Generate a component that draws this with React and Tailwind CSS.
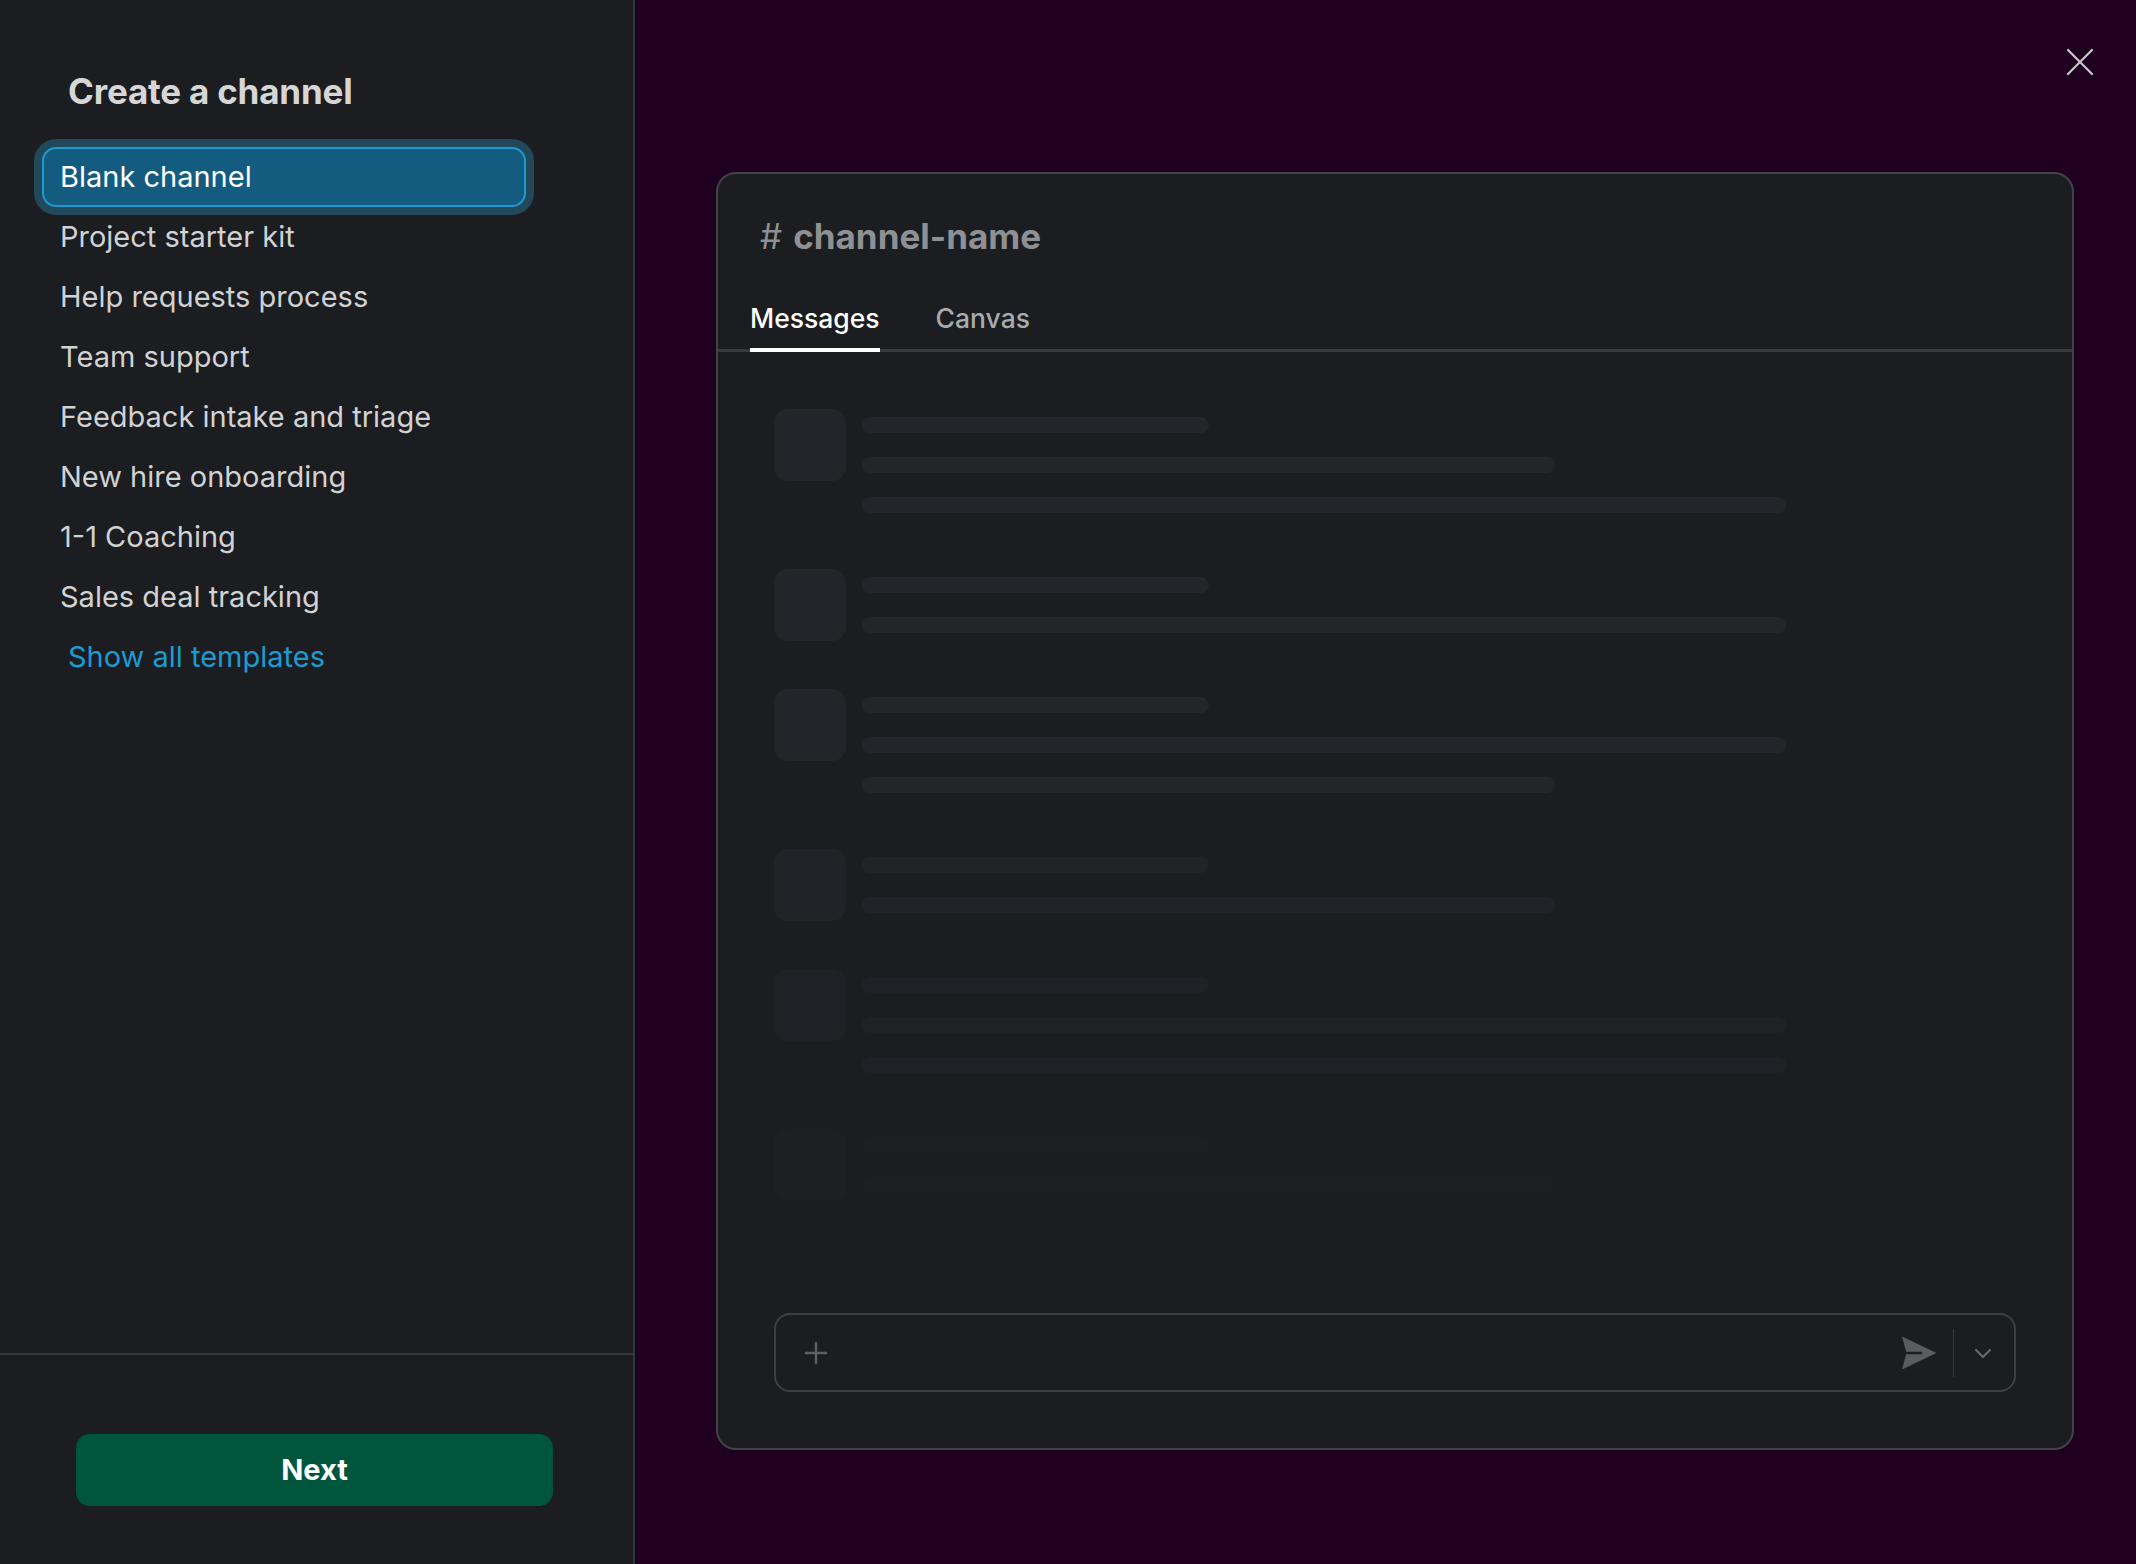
import React from 'react';

const templates = [
  'Blank channel',
  'Project starter kit',
  'Help requests process',
  'Team support',
  'Feedback intake and triage',
  'New hire onboarding',
  '1-1 Coaching',
  'Sales deal tracking',
];

// widths of the placeholder lines
const SHORT = 'w-[347px]';
const MID = 'w-[693px]';
const LONG = 'w-[924px]';

const rows = [
  { lines: [SHORT, MID, LONG], fade: 'opacity-100' },
  { lines: [SHORT, LONG], fade: 'opacity-100' },
  { lines: [SHORT, LONG, MID], fade: 'opacity-100' },
  { lines: [SHORT, MID], fade: 'opacity-80' },
  { lines: [SHORT, LONG, LONG], fade: 'opacity-60' },
  { lines: [SHORT, MID], fade: 'opacity-25' },
];

function SkeletonRow({ lines, fade }) {
  return (
    <div className={`flex gap-4 ${fade}`}>
      <div className="w-[72px] h-[72px] flex-shrink-0 rounded-[14px] bg-[#24252a]" />
      <div className="flex flex-col gap-6 py-2">
        {lines.map((w, i) => (
          <div key={i} className={`${w} h-4 rounded-full bg-[#24252a]`} />
        ))}
      </div>
    </div>
  );
}

function SendIcon() {
  return (
    <svg width="36" height="34" viewBox="0 0 36 34">
      <path d="M1 0.5 L35.5 17 L1 33.5 L5.5 17 Z" fill="#5b5c60" />
      <path d="M6 17 H20" stroke="#1b1d21" strokeWidth="2.5" strokeLinecap="round" />
    </svg>
  );
}

export default function App() {
  return (
    <div className="flex w-full h-[1564px] overflow-hidden font-['Inter','Liberation_Sans',sans-serif]">
      {/* Left — template picker */}
      <div className="w-[635px] flex-shrink-0 bg-[#1b1d21] border-r-2 border-[#35363a] flex flex-col">
        <div className="flex-1 pt-[71px]">
          <h1 className="pl-[68px] text-[35px] leading-[40px] font-bold text-[#d6d6d7] tracking-[-0.2px]">
            Create a channel
          </h1>
          <div className="mt-[36px] flex flex-col">
            {templates.map((t, i) =>
              i === 0 ? (
                <div
                  key={t}
                  className="ml-[42px] w-[484px] h-[60px] flex items-center pl-4 rounded-[14px] bg-[#145b80] border-2 border-[#1d9bd1] shadow-[0_0_0_8px_#22485b] text-[29px] text-white"
                >
                  {t}
                </div>
              ) : (
                <div key={t} className="h-[60px] flex items-center pl-[60px] text-[29px] text-[#d1d2d3]">
                  {t}
                </div>
              )
            )}
            <div className="h-[60px] flex items-center pl-[68px] text-[29px] text-[#1d9bd1]">
              Show all templates
            </div>
          </div>
        </div>
        <div className="border-t-2 border-[#36373b] pt-[79px] pb-[58px] pl-[76px]">
          <button className="w-[477px] h-[72px] rounded-[14px] bg-[#00553d] text-white text-[29px] font-bold">
            Next
          </button>
        </div>
      </div>

      {/* Right — preview */}
      <div className="relative flex-1 bg-[#1f0021] pt-[172px] pl-[81px] pr-[62px]">
        <button className="absolute top-[48px] right-[42px] w-7 h-7 flex items-center justify-center">
          <svg width="28" height="28" viewBox="0 0 28 28" fill="none" stroke="#c8c8ca" strokeWidth="2.2" strokeLinecap="round">
            <path d="M2 2 L26 26 M26 2 L2 26" />
          </svg>
        </button>

        <div className="h-[1278px] rounded-[20px] border-2 border-[#424347] bg-[#1b1d21] flex flex-col">
          <div className="pt-[42px] pl-[42px] text-[35px] leading-[40px] font-bold text-[#8f9093] flex items-baseline">
            <span className="font-normal mr-[11px]">#</span>
            <span>channel-name</span>
          </div>

          <div className="mt-[46px] flex gap-[56px] pl-[32px] border-b-[3px] border-[#393a3e]">
            <div className="pb-[14px] border-b-4 border-white -mb-[3px] text-[26.5px] leading-[32px] font-medium text-white">
              Messages
            </div>
            <div className="pb-[14px] text-[26.5px] leading-[32px] font-medium text-[#a9aaad]">Canvas</div>
          </div>

          <div className="flex-1 pt-[57px] px-[56px] flex flex-col gap-12 overflow-hidden">
            {rows.map((r, i) => (
              <SkeletonRow key={i} lines={r.lines} fade={r.fade} />
            ))}
          </div>

          <div className="px-[56px] pb-[56px]">
            <div className="h-[79px] rounded-[16px] border-2 border-[#3e3f43] flex items-center pl-[28px] pr-[20px]">
              <svg width="24" height="24" viewBox="0 0 24 24" fill="none" stroke="#5f6064" strokeWidth="2.4" strokeLinecap="round">
                <path d="M12 2 V22 M2 12 H22" />
              </svg>
              <div className="flex-1" />
              <SendIcon />
              <div className="w-px h-[48px] bg-[#37383c] ml-[16px] mr-[18px]" />
              <svg width="22" height="22" viewBox="0 0 22 22" fill="none" stroke="#66676b" strokeWidth="2.2" strokeLinecap="round" strokeLinejoin="round">
                <path d="M4 8 L11 15 L18 8" />
              </svg>
            </div>
          </div>
        </div>
      </div>
    </div>
  );
}
